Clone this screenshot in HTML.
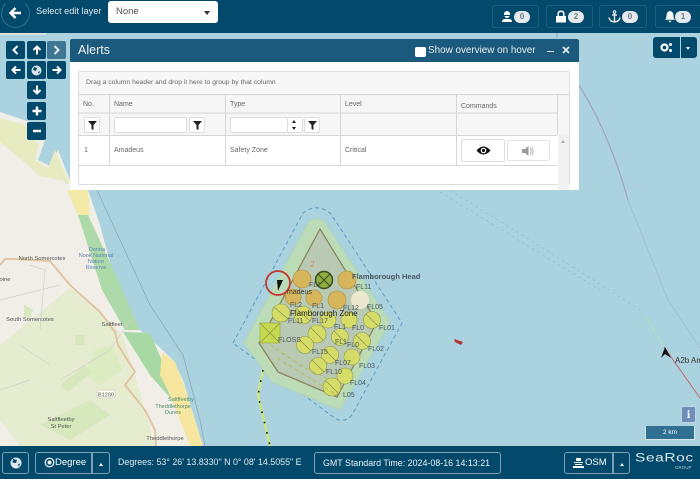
<!DOCTYPE html>
<html><head><meta charset="utf-8"><style>
html,body{margin:0;padding:0}
body{width:700px;height:479px;overflow:hidden;position:relative;background:#aad3df;font-family:"Liberation Sans",sans-serif;color:#fff}
.a{position:absolute;box-sizing:border-box}
.bar{left:0;width:700px;background:#02496c}
.nb{width:19px;height:18px;background:#02496c;border-radius:2px;display:flex;align-items:center;justify-content:center}
.st{top:5px;height:23px;border:1px solid #1b5f80;border-radius:3px}
.pill{position:absolute;right:8px;top:5px;width:16px;height:12px;border-radius:6px;background:#e4eaed;color:#6b7a82;font-size:8px;line-height:12px;text-align:center;font-weight:bold}
.bb{top:452px;height:22px;border:1px solid #7fa0b3;border-radius:3px;font-size:9.5px;line-height:20px;white-space:nowrap}
.t{font-size:7px;color:#666;white-space:nowrap;line-height:9px}
.fb{height:15px;border:1px solid #ddd;border-radius:2px;background:#fff}
.ln{background:#d6d6d6}
</style></head><body>
<svg class="a" style="left:0;top:0" width="700" height="479" viewBox="0 0 700 479">
<rect width="700" height="479" fill="#aad3df"/>
<path d="M0 112L30 122L45 140L38 160L50 166L58 150L70 180L88 190L100 225L113 273L140 330L157 345L173 360L183 380L203 446L0 446Z" fill="#f0eee6"/>
<path d="M0 118L25 125L38 145L35 160L48 168L55 150L70 185L60 180L40 176L10 150L0 142Z" fill="#e6ecc0"/>
<path d="M67 190H88L90 215H78Z" fill="#f3eaa8"/>
<path d="M78 215L88 215L115 273L140 330L125 330L102 290Z" fill="#aedaa9"/>
<path d="M123 332L150 333L163 363L172 400L150 375Z" fill="#a8d8a4"/>
<path d="M162 352L175 362L183 382L203 446H190L180 420L170 395L160 375Z" fill="#f7e6a0"/>
<path d="M0 345L70 288L100 312L122 335L135 375L155 446H20L0 420Z" fill="#e6ecd0"/>
<path d="M95 350L112 345L122 370L100 385L85 375Z" fill="#dcebc0"/>
<path d="M24 305L33 310L30 318L24 316Z M75 335H84L85 345L75 345Z M40 425L90 400L110 415L70 440Z M60 385L85 365L92 372L68 392Z" fill="#d6e8bc"/>
<path d="M0 265L5 259H15L50 261L70 285L100 312L115 332L118 345L135 372L125 385L145 410L155 430L156 446" fill="none" stroke="#e0c29c" stroke-width="1.800"/>
<path d="M0 300L60 285M20 345L50 365M130 320L110 350L60 380M30 265L45 270L40 330M0 390L30 380" fill="none" stroke="#d0d0ca" stroke-width=".7"/>
<path d="M97 190L120 240L150 305L183 355L200 420L205 446" fill="none" stroke="#8aa5b5" stroke-width=".7"/>
<path d="M557 33V38M579 85Q610 135 628 200" fill="none" stroke="#a4a4bf" stroke-width="1.300"/>
<path d="M628 200Q650 255 668 300L700 348" fill="none" stroke="#a6bfd0" stroke-width="1"/>
<path d="M450 190L570 265L640 310M440 192L600 290" fill="none" stroke="#8cbad2" stroke-width=".6" stroke-dasharray="3 3"/>
<path d="M664 347L700 398" fill="none" stroke="#c56a6a" stroke-width="1"/>
<path d="M645 315L664 347" fill="none" stroke="#bfe3a0" stroke-width="1" stroke-dasharray="3 2"/>
<path d="M665 347L661 358L665 354L671 358Z" fill="#111"/>
<path d="M454 339L463 342L461 345L455 342Z" fill="#b03030"/>
<path d="M233 343L303 213Q317 202 331 214L402 323L352 415Q343 425 332 416Z" fill="none" stroke="#5a9cc8" stroke-width="1" stroke-dasharray="4 3"/>
<path d="M244 343L308 223Q317 214 326 224L390 322L340 410L272 382Z" fill="#bcdcb8" stroke="#b0d6b2" stroke-width="1"/>
<path d="M259 343L320 229L377 322L337 397L278 372Z" fill="#b9cab4" stroke="#8a8459" stroke-width="1.300"/>
<g fill="#d7b55a" stroke="#a89048" stroke-width=".6"><circle cx="302" cy="279" r="9"/><circle cx="347" cy="280" r="9"/><circle cx="293" cy="297" r="8"/><circle cx="314" cy="298" r="8"/><circle cx="337" cy="300" r="9"/></g>
<circle cx="360" cy="300" r="9" fill="#eee7cf"/>
<circle cx="324" cy="280" r="8.500" fill="#8fae40" stroke="#3c4a20" stroke-width="1.500"/><path d="M318 274L330 286M330 274L318 286" stroke="#3c4a20"/>
<g fill="#d5dc68" stroke="#909a4c" stroke-width=".6">
<circle cx="281" cy="313" r="9"/><circle cx="303" cy="315" r="9"/><circle cx="328" cy="320" r="8"/><circle cx="349" cy="320" r="8"/><circle cx="372" cy="320" r="8.500"/><circle cx="317" cy="334" r="9"/><circle cx="340" cy="337" r="8.500"/><circle cx="362" cy="341" r="8.500"/><circle cx="305" cy="345" r="8.500"/><circle cx="330" cy="355" r="8.500"/><circle cx="352" cy="357" r="8"/><circle cx="318" cy="366" r="8.500"/><circle cx="332" cy="387" r="9"/><circle cx="345" cy="376" r="8"/>
</g>
<rect x="260" y="323" width="20" height="20" fill="#c4d850" stroke="#a2a848" stroke-width=".7"/><path d="M260 323L280 343M280 323L260 343" stroke="#8b9440" stroke-width=".7"/>
<g stroke="#818c4e" stroke-width=".6"><path d="M274 307L288 319M297 309L310 321M311 328L323 340M334 331L346 343M356 335L368 347M299 339L311 351M324 349L336 361M312 360L324 372M326 381L338 393M366 314L378 326"/></g>
<path d="M277 358L337 395M270 345L305 368L330 380" fill="none" stroke="#b2bb56" stroke-width="1" stroke-dasharray="4 3"/>
<circle cx="278" cy="283" r="12" fill="none" stroke="#c4352f" stroke-width="1.800"/>
<path d="M277 280L283 280L278 291Z" fill="#111"/>
<path d="M263 370L258 395L270 446" fill="none" stroke="#cce67a" stroke-width="2.400"/>
<path d="M263 370L258 395L270 446" fill="none" stroke="#111" stroke-width="1.600" stroke-dasharray="1.600 9"/>
<g font-family="Liberation Sans,sans-serif" font-size="7" fill="#4a5763"><text x="352" y="279" font-weight="bold" font-size="7.500">Flamborough Head</text><text x="356" y="289">FL11</text><text x="309" y="287">FL1</text><text x="367" y="309">FL05</text><text x="343" y="310">FL12</text><text x="379" y="330">FL01</text><text x="368" y="351">FL02</text><text x="359" y="368">FL03</text><text x="350" y="385">FL04</text><text x="343" y="397">L05</text><text x="278" y="342">FLOSS</text><text x="288" y="323">FL11</text><text x="312" y="323">FL17</text><text x="334" y="329">FL1</text><text x="312" y="354">FL15</text><text x="326" y="374">FL10</text><text x="335" y="365">FL07</text><text x="290" y="307">FL2</text><text x="312" y="308">FL1</text><text x="352" y="330">FL0</text><text x="347" y="347">FL0</text><text x="335" y="344">FL1</text></g>
<text x="290" y="316" font-family="Liberation Sans,sans-serif" font-size="8" fill="#222">Flamborough Zone</text>
<text x="287" y="294" font-family="Liberation Sans,sans-serif" font-size="7" fill="#333">madeus</text>
<text x="310" y="267" font-family="Liberation Sans,sans-serif" font-size="8" fill="#d08a6a">2</text>
<g font-family="Liberation Sans,sans-serif" font-size="5.800" fill="#555" text-anchor="middle"><text x="42" y="260">North Somercotes</text><text x="30" y="321">South Somercotes</text><text x="112" y="326">Saltfleet</text><text x="61" y="421">Saltfleetby</text><text x="61" y="428">St Peter</text><text x="165" y="440">Theddlethorpe</text><text x="5" y="281">oine</text></g>
<g font-family="Liberation Sans,sans-serif" font-size="5.500" fill="#4a8a6a" text-anchor="middle"><text x="181" y="401">Saltfleetby</text><text x="173" y="408">Theddlethorpe</text><text x="173" y="414">Dunes</text></g>
<g font-family="Liberation Sans,sans-serif" font-size="5.500" fill="#5a85b5" text-anchor="middle"><text x="97" y="251">Donna</text><text x="96" y="257">Nook National</text><text x="96" y="263">Nature</text><text x="96" y="269">Reserve</text></g>
<rect x="97" y="390" width="18" height="8" rx="1.500" fill="#fdfdf0" stroke="#bbb" stroke-width=".5"/><text x="106" y="396.500" font-family="Liberation Sans,sans-serif" font-size="5.500" fill="#555" text-anchor="middle">B1200</text>
<text x="675" y="363" font-family="Liberation Sans,sans-serif" font-size="8" fill="#333">A2b Am</text>
</svg>

<div class="a bar" style="top:0;height:33px"></div>
<div class="a bar" style="top:446px;height:33px"></div>
<div class="a" style="left:0;top:33px;width:46px;height:2px;background:#e6e2d8;opacity:.8"></div>

<div class="a" style="left:1px;top:-1px;width:29px;height:29px;border-radius:50%;border:1px solid #2f6e8d;border-top-color:transparent"></div>
<svg class="a" style="left:8px;top:6px" width="15" height="14" viewBox="0 0 15 14"><path d="M13 7H3M7.500 2L2.500 7L7.500 12" fill="none" stroke="#fff" stroke-width="2.400"/></svg>
<div class="a" style="left:36px;top:5px;font-size:9.200px;line-height:12px;color:#dfe9ee;white-space:nowrap">Select edit layer</div>
<div class="a" style="left:108px;top:1px;width:110px;height:22px;background:#fff;border-radius:3px;color:#555;font-size:9.500px;line-height:22px;padding-left:8px">None<span style="position:absolute;left:96px;top:10px;border:3.500px solid transparent;border-top:4px solid #333;border-bottom:0"></span></div>

<div class="a st" style="left:492px;width:47px"><svg class="a" style="left:8px;top:4px" width="12" height="13" viewBox="0 0 12 13"><path d="M3 3Q6 -1 9 3V5H3ZM3.500 6H8.500Q8 8 6 8T3.500 6ZM1 12Q1 9 4 9H8Q11 9 11 12Z" fill="#fff"/></svg><span class="pill">0</span></div>
<div class="a st" style="left:546px;width:47px"><svg class="a" style="left:8px;top:4px" width="12" height="13" viewBox="0 0 12 13"><path d="M1 6H11V12.500H1Z" fill="#fff"/><path d="M3.200 6V4Q3.200 1.200 6 1.200T8.800 4V6" fill="none" stroke="#fff" stroke-width="1.500"/></svg><span class="pill">2</span></div>
<div class="a st" style="left:599px;width:48px"><svg class="a" style="left:8px;top:4px" width="13" height="13" viewBox="0 0 13 13"><circle cx="6.500" cy="2" r="1.300" fill="none" stroke="#fff"/><path d="M6.500 3.300V12M4 5H9M1 7.500Q1.500 11.500 6.500 12Q11.500 11.500 12 7.500" fill="none" stroke="#fff" stroke-width="1.300"/></svg><span class="pill">0</span></div>
<div class="a st" style="left:655px;width:47px"><svg class="a" style="left:8px;top:4px" width="12" height="13" viewBox="0 0 12 13"><path d="M6 1Q9.500 1.500 9.500 6Q9.500 8.500 11 9.800H1Q2.500 8.500 2.500 6Q2.500 1.500 6 1ZM4.500 10.800H7.500Q7 12.300 6 12.300T4.500 10.800Z" fill="#fff"/></svg><span class="pill" style="right:10px">1</span></div>

<div class="a nb" style="left:6px;top:41px"><svg width="9" height="10"><path d="M6.500 1L2.500 5L6.500 9" fill="none" stroke="#fff" stroke-width="2"/></svg></div>
<div class="a nb" style="left:27px;top:41px"><svg width="10" height="10"><path d="M5 9.500V2M1.500 5L5 1.500L8.500 5" fill="none" stroke="#fff" stroke-width="2"/></svg></div>
<div class="a nb" style="left:47px;top:41px;background:#3d7592"><svg width="9" height="10"><path d="M2.500 1L6.500 5L2.500 9" fill="none" stroke="#dfe9ee" stroke-width="2"/></svg></div>
<div class="a nb" style="left:6px;top:61px"><svg width="10" height="10"><path d="M9.500 5H2M5 1.500L1.500 5L5 8.500" fill="none" stroke="#fff" stroke-width="2"/></svg></div>
<div class="a nb" style="left:27px;top:61px"><svg width="11" height="11"><circle cx="5.500" cy="5.500" r="5" fill="#dce6eb"/><path d="M3 2L6 3L5 6L2 5ZM7 7L9 6L8 9Z" fill="#02496c"/></svg></div>
<div class="a nb" style="left:47px;top:61px"><svg width="10" height="10"><path d="M.5 5H8M5 1.500L8.500 5L5 8.500" fill="none" stroke="#fff" stroke-width="2"/></svg></div>
<div class="a nb" style="left:27px;top:81px"><svg width="10" height="10"><path d="M5 .5V8M1.500 5L5 8.500L8.500 5" fill="none" stroke="#fff" stroke-width="2"/></svg></div>
<div class="a nb" style="left:27px;top:102px"><svg width="10" height="10"><path d="M5 .5V9.500M.5 5H9.500" stroke="#fff" stroke-width="2.400"/></svg></div>
<div class="a nb" style="left:27px;top:122px"><svg width="10" height="10"><path d="M1 5H9" stroke="#fff" stroke-width="2.400"/></svg></div>

<div class="a" style="left:653px;top:37px;width:27px;height:21px;background:#02496c;border-radius:3px 0 0 3px"><svg class="a" style="left:7px;top:5px" width="13" height="11" viewBox="0 0 13 11"><circle cx="4.500" cy="5.500" r="3" fill="none" stroke="#fff" stroke-width="2.200"/><circle cx="10.500" cy="2.500" r="1.500" fill="#fff"/><circle cx="10.500" cy="8.500" r="1.500" fill="#fff"/></svg></div>
<div class="a" style="left:681px;top:37px;width:16px;height:21px;background:#02496c;border-radius:0 3px 3px 0"><span class="a" style="left:5px;top:10px;border:2.500px solid transparent;border-top:3px solid #fff;border-bottom:0"></span></div>

<div class="a" style="left:70px;top:39px;width:509px;height:151px;background:#fff;border-radius:2px"></div>
<div class="a" style="left:70px;top:39px;width:509px;height:23px;background:#1b5a7d;border-radius:2px 2px 0 0"></div>
<div class="a" style="left:78px;top:42px;font-size:12.500px;line-height:16px;color:#f0f5f7">Alerts</div>
<div class="a" style="left:415px;top:47px;width:11px;height:10px;background:#fff;border-radius:2px"></div>
<div class="a" style="left:428px;top:44px;font-size:9.900px;line-height:13px;color:#e8eff3;white-space:nowrap">Show overview on hover</div>
<div class="a" style="left:547px;top:50.500px;width:7px;height:1.500px;background:#dfe9ee"></div>
<svg class="a" style="left:562px;top:46px" width="8" height="8"><path d="M1 1L7 7M7 1L1 7" stroke="#dfe9ee" stroke-width="1.800"/></svg>

<div class="a" style="left:78px;top:71px;width:492px;height:114px;border:1px solid #ddd;border-radius:2px;background:#fff"></div>
<div class="a" style="left:79px;top:72px;width:490px;height:23px;background:#f7f7f7"></div>
<div class="a t" style="left:86px;top:78px;font-size:6.800px">Drag a column header and drop it here to group by that column</div>
<div class="a" style="left:79px;top:95px;width:478px;height:40px;background:#f6f6f6"></div>
<div class="a" style="left:557px;top:95px;width:12px;height:40px;background:#f6f6f6"></div>
<div class="a ln" style="left:79px;top:94px;width:490px;height:1px"></div>
<div class="a" style="left:79px;top:112px;width:478px;height:2px;background:#e6e6e6"></div>
<div class="a ln" style="left:79px;top:135px;width:478px;height:1px"></div>
<div class="a ln" style="left:79px;top:165px;width:478px;height:1px"></div>
<div class="a ln" style="left:109px;top:95px;width:1px;height:70px"></div>
<div class="a ln" style="left:225px;top:95px;width:1px;height:70px"></div>
<div class="a ln" style="left:340px;top:95px;width:1px;height:70px"></div>
<div class="a ln" style="left:456px;top:95px;width:1px;height:70px"></div>
<div class="a ln" style="left:557px;top:95px;width:1px;height:40px"></div>
<div class="a" style="left:558px;top:135px;width:11px;height:55px;background:#f1f1f1"></div>
<span class="a" style="left:561px;top:140px;border:2.500px solid transparent;border-bottom:3px solid #aaa;border-top:0"></span>

<div class="a t" style="left:83px;top:100px">No.</div>
<div class="a t" style="left:114px;top:100px">Name</div>
<div class="a t" style="left:230px;top:100px">Type</div>
<div class="a t" style="left:345px;top:100px">Level</div>
<div class="a t" style="left:461px;top:102px">Commands</div>
<div class="a t" style="left:84px;top:146px">1</div>
<div class="a t" style="left:114px;top:146px">Amadeus</div>
<div class="a t" style="left:230px;top:146px">Safety Zone</div>
<div class="a t" style="left:345px;top:146px">Critical</div>

<div class="a fb" style="left:84px;top:117px;width:16px;height:16px"><svg class="a" style="left:3px;top:3px" width="9" height="9"><path d="M0 0H9L5.500 4V9L3.500 8V4Z" fill="#222"/></svg></div>
<div class="a fb" style="left:114px;top:117px;width:73px;height:16px"></div>
<div class="a fb" style="left:189px;top:117px;width:16px;height:16px"><svg class="a" style="left:3px;top:3px" width="9" height="9"><path d="M0 0H9L5.500 4V9L3.500 8V4Z" fill="#222"/></svg></div>
<div class="a fb" style="left:230px;top:117px;width:73px;height:16px"></div>
<div class="a" style="left:287px;top:118px;width:1px;height:14px;background:#ddd"></div>
<span class="a" style="left:292px;top:120px;border:2.500px solid transparent;border-bottom:3px solid #222;border-top:0"></span>
<span class="a" style="left:292px;top:127px;border:2.500px solid transparent;border-top:3px solid #222;border-bottom:0"></span>
<div class="a fb" style="left:304px;top:117px;width:16px;height:16px"><svg class="a" style="left:3px;top:3px" width="9" height="9"><path d="M0 0H9L5.500 4V9L3.500 8V4Z" fill="#222"/></svg></div>

<div class="a" style="left:461px;top:139px;width:44px;height:23px;border:1px solid #ddd;border-radius:2px;background:#fff"><svg class="a" style="left:14px;top:5px" width="15" height="11" viewBox="0 0 15 11"><path d="M.5 5.500Q7.500 -2.500 14.500 5.500Q7.500 13.500 .5 5.500Z" fill="#111"/><circle cx="7.500" cy="5.500" r="2.800" fill="#fff"/><circle cx="7.500" cy="5.500" r="1.600" fill="#111"/></svg></div>
<div class="a" style="left:507px;top:140px;width:43px;height:21px;border:1px solid #e3e3e3;border-radius:2px;background:#fff"><svg class="a" style="left:14px;top:4px" width="13" height="12" viewBox="0 0 13 12"><path d="M0 4H3L6.500 1V11L3 8H0Z" fill="#9a9a9a"/><path d="M8 3Q10.500 6 8 9M9.500 1.500Q13 6 9.500 10.500" fill="none" stroke="#b5b5b5"/></svg></div>

<div class="a" style="left:681px;top:406px;width:15px;height:17px;background:#6f8fbb;border:1px solid #c0d4e2;border-radius:2px;color:#fff;font-size:12px;font-weight:bold;line-height:15px;text-align:center;font-family:'Liberation Serif',serif">i</div>
<div class="a" style="left:645px;top:426px;width:50px;height:14px;background:#2f6f91;color:#fff;font-size:6.500px;line-height:13px;text-align:center;border-left:1px solid #d5e5ec;border-right:1px solid #d5e5ec;border-bottom:1px solid #d5e5ec">2 km</div>

<div class="a bb" style="left:2px;width:27px"><svg class="a" style="left:7px;top:4px" width="12" height="12"><circle cx="6" cy="6" r="5.500" fill="#dce6eb"/><path d="M3 2L7 3L6 6L2.500 5.500ZM8 7L10 6.500L9 10Z" fill="#02496c"/></svg></div>
<div class="a bb" style="left:35px;width:57px;border-radius:3px 0 0 3px;padding-left:19px"><svg class="a" style="left:8px;top:4px" width="11" height="11"><circle cx="5.500" cy="5.500" r="4.300" fill="none" stroke="#fff" stroke-width="1.200"/><circle cx="5.500" cy="5.500" r="2" fill="#fff"/></svg>Degree</div>
<div class="a bb" style="left:92px;width:18px;border-radius:0 3px 3px 0;border-left:1px solid #7fa0b3"><span class="a" style="left:6px;top:10px;border:2.500px solid transparent;border-bottom:3px solid #fff;border-top:0"></span></div>
<div class="a" style="left:118px;top:456px;font-size:8.900px;line-height:13px;color:#dfe9ee;white-space:nowrap">Degrees: 53° 26' 13.8330" N 0° 08' 14.5055" E</div>
<div class="a bb" style="left:314px;width:187px;padding-left:8px;color:#eef3f6;font-size:8.900px">GMT Standard Time: 2024-08-16 14:13:21</div>
<div class="a bb" style="left:564px;width:49px;border-radius:3px 0 0 3px;padding-left:20px"><svg class="a" style="left:8px;top:4px" width="11" height="12" viewBox="0 0 11 12"><path d="M3 1H8V4H3ZM1 5H10V6H1ZM2 7H9V8H2ZM0 9H11V11H0Z" fill="#fff"/></svg>OSM</div>
<div class="a bb" style="left:613px;width:17px;border-radius:0 3px 3px 0"><span class="a" style="left:6px;top:10px;border:2.500px solid transparent;border-bottom:3px solid #fff;border-top:0"></span></div>
<div class="a" style="left:635px;top:452px;width:65px;font-size:15.500px;line-height:15px;color:#dfe9ee;letter-spacing:.6px;white-space:nowrap;transform:scaleY(.8);transform-origin:0 0">SeaRoc</div>
<div class="a" style="left:675px;top:465px;font-size:4.500px;line-height:6px;color:#b7ccd7">GROUP</div>
</body></html>
